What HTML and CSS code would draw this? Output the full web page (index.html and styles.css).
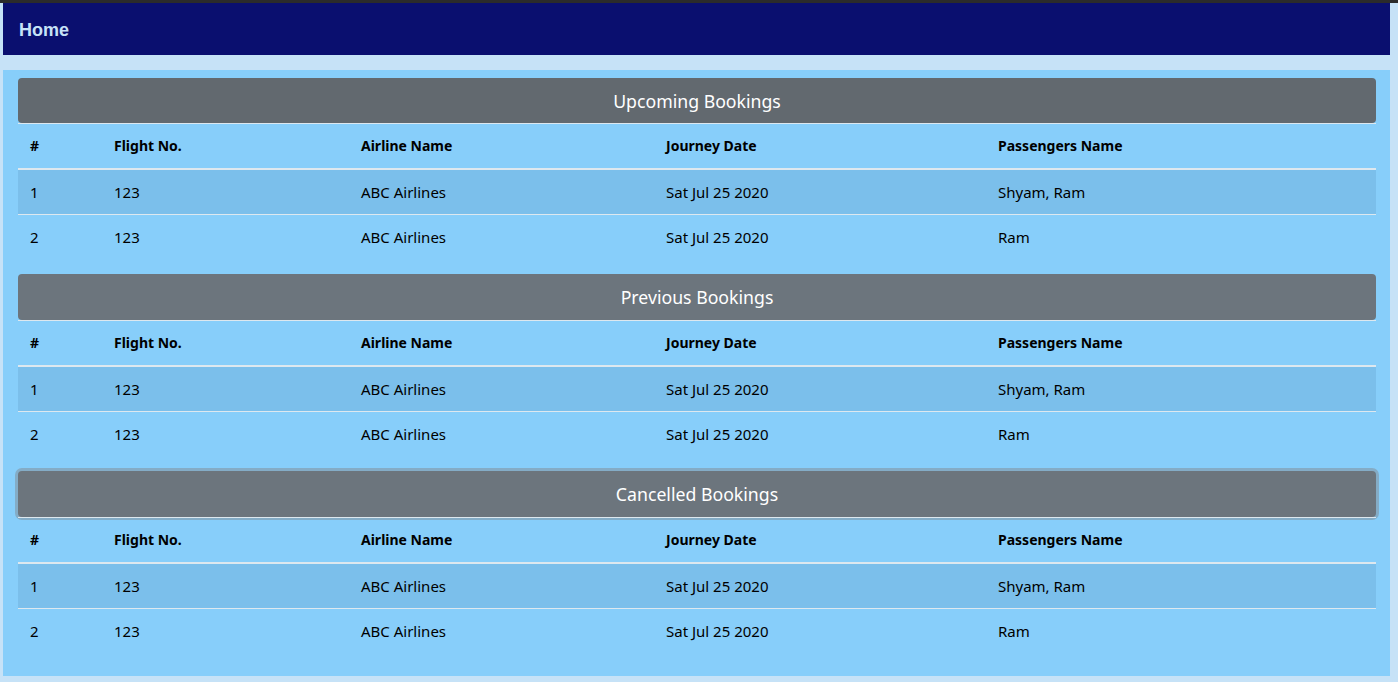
FILE: index.html
```html
<!DOCTYPE html>
<html>
<head>
<meta charset="utf-8">
<link rel="stylesheet" href="styles.css">
</head>
<body>
<div class="topstrip"></div>
<div class="page">
  <nav class="navbar"><a class="brand" href="#">Home</a></nav>
  <main class="content">
    <section class="section">
      <div class="sec-head dark">Upcoming Bookings</div>
      <table class="bookings">
        <thead>
          <tr><th class="c1">#</th><th class="c2">Flight No.</th><th class="c3">Airline Name</th><th class="c4">Journey Date</th><th class="c5">Passengers Name</th></tr>
        </thead>
        <tbody>
          <tr class="odd"><td>1</td><td>123</td><td>ABC Airlines</td><td>Sat Jul 25 2020</td><td>Shyam, Ram</td></tr>
          <tr><td>2</td><td>123</td><td>ABC Airlines</td><td>Sat Jul 25 2020</td><td>Ram</td></tr>
        </tbody>
      </table>
    </section>
    <section class="section">
      <div class="sec-head">Previous Bookings</div>
      <table class="bookings">
        <thead>
          <tr><th class="c1">#</th><th class="c2">Flight No.</th><th class="c3">Airline Name</th><th class="c4">Journey Date</th><th class="c5">Passengers Name</th></tr>
        </thead>
        <tbody>
          <tr class="odd"><td>1</td><td>123</td><td>ABC Airlines</td><td>Sat Jul 25 2020</td><td>Shyam, Ram</td></tr>
          <tr><td>2</td><td>123</td><td>ABC Airlines</td><td>Sat Jul 25 2020</td><td>Ram</td></tr>
        </tbody>
      </table>
    </section>
    <section class="section">
      <div class="sec-head focus">Cancelled Bookings</div>
      <table class="bookings">
        <thead>
          <tr><th class="c1">#</th><th class="c2">Flight No.</th><th class="c3">Airline Name</th><th class="c4">Journey Date</th><th class="c5">Passengers Name</th></tr>
        </thead>
        <tbody>
          <tr class="odd"><td>1</td><td>123</td><td>ABC Airlines</td><td>Sat Jul 25 2020</td><td>Shyam, Ram</td></tr>
          <tr><td>2</td><td>123</td><td>ABC Airlines</td><td>Sat Jul 25 2020</td><td>Ram</td></tr>
        </tbody>
      </table>
    </section>
  </main>
</div>
</body>
</html>
```

FILE: styles.css
```css
html, body {
  margin: 0;
  padding: 0;
}
body {
  background: #c6e2f7;
  font-family: "Noto Sans", "Open Sans", sans-serif;
  color: #000;
  overflow: hidden;
}
.topstrip {
  height: 3px;
  background: #2b2b2b;
}
.page {
  padding: 0 8px 0 3px;
}
.navbar {
  height: 52px;
  box-sizing: border-box;
  padding-top: 2px;
  background: #0a0f6f;
  display: flex;
  align-items: center;
  padding-left: 16px;
}
.brand {
  font-family: "Liberation Sans", Arial, sans-serif;
  font-weight: bold;
  font-size: 18px;
  color: #c6e2f7;
  text-decoration: none;
}
.content {
  margin-top: 15px;
  background: #87cefa;
  padding: 8px 14px 8px 15px;
}
.sec-head {
  height: 45px;
  border-radius: 4px;
  background: #6c757d;
  color: #fff;
  font-size: 17.7px;
  display: flex;
  align-items: center;
  justify-content: center;
}
.section + .section .sec-head {
  height: 46px;
}
.sec-head.dark {
  background: #62696f;
}
.sec-head.focus {
  box-shadow: 0 0 0 3px rgba(130, 138, 145, 0.5);
}
.bookings {
  width: 100%;
  border-collapse: separate;
  border-spacing: 0;
  margin-bottom: 15px;
  font-size: 15px;
  line-height: 20px;
  table-layout: fixed;
}
.bookings th,
.bookings td {
  text-align: left;
  padding: 12px;
  vertical-align: top;
}
.bookings th {
  font-size: 14px;
  font-weight: bold;
  border-top: 1px solid #dde8ef;
  border-bottom: 2px solid #dde8ef;
}
.bookings tbody tr + tr td {
  border-top: 1px solid #dde8ef;
}
.bookings tr.odd td {
  background: #7bbfeb;
}
.c1 { width: 60px; }
.c2 { width: 223px; }
.c3 { width: 281px; }
.c4 { width: 308px; }
.c5 { width: auto; }
```
